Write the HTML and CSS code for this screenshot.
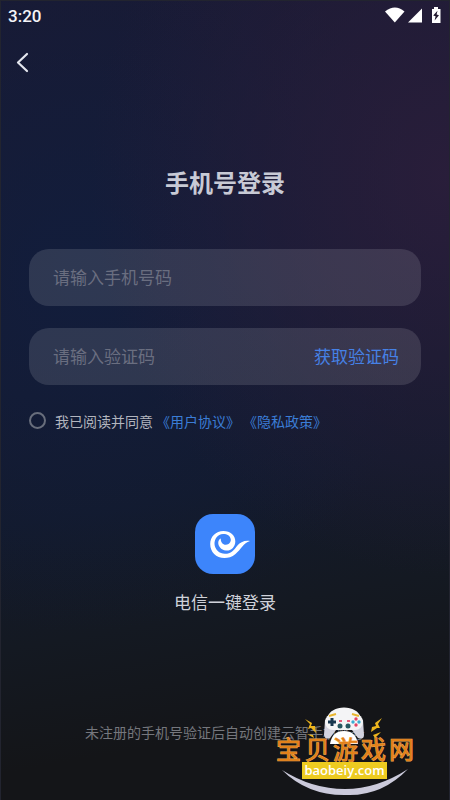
FILE: index.html
```html
<!DOCTYPE html>
<html lang="zh-CN">
<head>
<meta charset="utf-8">
<meta name="viewport" content="width=device-width, initial-scale=1">
<title>手机号登录</title>
<link rel="stylesheet" href="styles.css">
</head>
<body>
<div class="screen">
  <header class="status">
    <span class="clock">3:20</span>
    <svg class="status-icons" width="56" height="18" viewBox="0 0 56 18" aria-hidden="true">
      <path fill="#fff" d="M0 4.500Q10 -3.500 19.500 4.500L9.800 15.500Z"/>
      <path fill="#fff" d="M37 1.500V15.500H23Z"/>
      <path fill="#fff" d="M47 2H49V0H53V2H55.500V16H47Z"/>
      <path fill="#21192f" d="M52.500 3.800L48.200 8.500L50.600 9.300L49.600 13.500L54 8.300L51.600 7.600Z"/>
    </svg>
  </header>
  <nav class="nav">
    <button class="back" type="button" aria-label="返回">
      <svg width="14" height="22" viewBox="0 0 14 22" aria-hidden="true"><path d="M12 3L3 11.500L12 20" fill="none" stroke="#e4e6ee" stroke-width="2.200" stroke-linecap="round" stroke-linejoin="round"/></svg>
    </button>
  </nav>
  <main class="main">
    <h1 class="title">手机号登录</h1>
    <form class="form">
      <div class="field">
        <input class="input" type="tel" placeholder="请输入手机号码" aria-label="手机号码">
      </div>
      <div class="field">
        <input class="input" type="text" placeholder="请输入验证码" aria-label="验证码">
        <button class="code" type="button">获取验证码</button>
      </div>
      <div class="agree">
        <input class="radio" type="checkbox" id="agree">
        <div class="terms"><label for="agree">我已阅读并同意</label><a href="#terms">《用户协议》</a><a href="#privacy">《隐私政策》</a></div>
      </div>
    </form>
    <button class="carrier" type="button">
      <svg width="60" height="60" viewBox="0 0 60 60" aria-hidden="true">
        <rect width="60" height="60" rx="18" fill="#3d85fb"/>
        <path fill="#fff" d="M55 27C48 29 46.500 35 40.500 40C37 43 33 44 29.500 44C21 44 15.200 38 15.200 30C15.200 22.500 21 17 28.300 17C35.500 17 40.300 21.500 40.300 27.500C40.300 33.500 35.500 37 31 36.500C26 36 22.800 32 23.300 28C23.500 26.500 24.300 25 25.800 24.500C25.500 28 28 31 31 30.800C34 30.500 36 28 35.800 25.500C35.300 21.500 31.500 19.800 28 20C22.500 20.500 19.300 25 19.500 30C19.800 35.500 24.500 39.800 30 39.800C36 39.800 39 36 42 32C45 28 50 26 55 27Z"/>
      </svg>
      <span>电信一键登录</span>
    </button>
  </main>
  <footer class="note">未注册的手机号验证后自动创建云智手机账号</footer>
  <div class="brand">
    <svg width="144" height="92" viewBox="0 0 144 92" role="img" aria-label="宝贝游戏网 baobeiy.com">
      <path fill="#cbcadb" d="M8 64Q38 83 71 83Q103 83 134 63Q108 90 73 89Q34 90 8 64Z"/>
      <path fill="#f4f4f6" d="M53 12C55 5 62 1.500 70 1.500C78 1.500 85 5 87 12Z"/>
      <path fill="#d3d3df" d="M51 14L50 29Q51 34 56 32L62 24H78L84 32Q90 34 90 29L89 14Z"/>
      <rect x="51" y="8" width="38" height="16" rx="8" fill="#f4f4f6"/>
      <path fill="#fff" d="M56 38Q58 25 70 25Q82 25 84 38Z"/>
      <path d="M55 10L62 8M78 8L85 10" stroke="#e8b52e" stroke-width="2"/>
      <path d="M58 12V20M54 16H62" stroke="#17364e" stroke-width="3"/>
      <circle cx="66" cy="20" r="2.500" fill="#275761"/><circle cx="74" cy="20" r="2.500" fill="#275761"/>
      <path d="M65 15H68M73 15H76" stroke="#e65b7a" stroke-width="2"/>
      <circle cx="82" cy="13" r="1.700" fill="#e34264"/><circle cx="82" cy="19" r="1.700" fill="#e34264"/><circle cx="79" cy="16" r="1.700" fill="#39acd2"/><circle cx="85" cy="16" r="1.700" fill="#39acd2"/>
      <path fill="#edb51d" d="M31 13L38 17L37 20L41 20L42 27L37 22L34 23L36 18ZM108 12L101 17L102 20L98 21L97 26L103 22L106 22L104 18ZM33 28L39 29L40 32ZM107 26L99 29L101 32Z"/>
      <text class="brand-name" x="2 31 59 87 115" y="53">宝贝游戏网</text>
      <rect x="28" y="56" width="85" height="17" fill="#edcb20"/>
      <text class="brand-url" x="70.500" y="69" text-anchor="middle">baobeiy.com</text>
    </svg>
  </div>
</div>
</body>
</html>
```
FILE: styles.css
```css
* { box-sizing: border-box; }

body {
  margin: 0;
  background: #141518;
  color: #d0d2da;
  font-family: "Noto Sans CJK SC", sans-serif;
}

button {
  padding: 0;
  border: 0;
  background: none;
  color: inherit;
  font: inherit;
  cursor: pointer;
}

.screen {
  position: relative;
  display: flex;
  flex-direction: column;
  min-height: 100vh;
  border: 1px solid #22242f;
  border-bottom: 0;
  background:
    radial-gradient(ellipse 80% 50% at 100% 22%, rgba(43, 30, 59, 0.9), rgba(43, 30, 59, 0) 100%),
    radial-gradient(ellipse 80% 45% at 18% 34%, rgba(17, 30, 62, 0.8), rgba(17, 30, 62, 0) 100%),
    linear-gradient(170deg, #191a34 0%, #161a32 38%, #131a2c 60%, #141922 74%, #141518 88%, #141518 100%);
}

.status {
  display: flex;
  align-items: center;
  justify-content: space-between;
  height: 30px;
  padding: 0 8px 0 7px;
}

.clock {
  color: #f4f4f8;
  font: 500 17px/30px Roboto, sans-serif;
}

.nav { padding: 20px 14px 0; }

.back {
  display: block;
  height: 22px;
}

.main {
  display: flex;
  flex-direction: column;
  padding: 91px 28px 0;
}

.title {
  margin: 0;
  color: #c8cad5;
  font-size: 24px;
  font-weight: 700;
  line-height: 36px;
  text-align: center;
}

.form {
  display: flex;
  flex-direction: column;
  gap: 22px;
  margin-top: 49px;
}

.field {
  display: flex;
  align-items: center;
  height: 57px;
  padding: 0 22px 2px 24px;
  border-radius: 20px;
  background: rgba(255, 255, 255, 0.12);
}

.input {
  flex: 1;
  min-width: 0;
  padding: 0;
  border: 0;
  outline: 0;
  background: none;
  color: #d0d2da;
  font: 400 17px/26px "Noto Sans CJK SC", sans-serif;
}

.input::placeholder { color: #6a6e80; }

.code {
  color: #4681e6;
  font-size: 17px;
  line-height: 26px;
}

.agree {
  display: flex;
  align-items: center;
  gap: 9px;
  height: 27px;
}

.radio {
  appearance: none;
  width: 17px;
  height: 17px;
  margin: 0;
  border: 2px solid #686e7c;
  border-radius: 50%;
}

.radio:checked { background: #3d85fb; }

.terms {
  display: flex;
  gap: 3px;
  color: #b2b5be;
  font-size: 14px;
  line-height: 22px;
}

.terms a {
  color: #3b7dd6;
  text-decoration: none;
}

.carrier {
  display: flex;
  flex-direction: column;
  align-items: center;
  align-self: center;
  gap: 15px;
  margin-top: 80px;
  font-size: 17px;
  line-height: 26px;
}

.note {
  margin-top: auto;
  padding: 24px 16px 57px;
  color: #75777d;
  font-size: 14px;
  line-height: 22px;
  text-align: center;
}

.brand {
  position: absolute;
  right: 31px;
  bottom: 2px;
}

.brand svg { display: block; }

.brand-name {
  fill: #e38118;
  stroke: #f0a850;
  stroke-width: 1px;
  paint-order: stroke;
  font: 400 25px "Noto Sans CJK SC", sans-serif;
}

.brand-url {
  fill: #fff;
  font: 600 13px "Open Sans", sans-serif;
}
```
